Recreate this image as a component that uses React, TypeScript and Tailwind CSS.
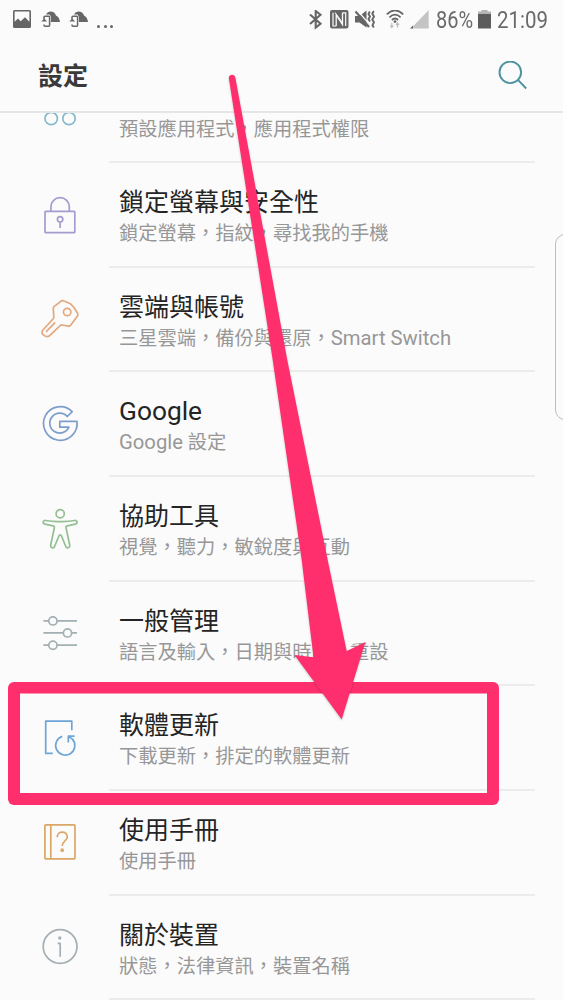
import React from 'react';

interface SettingItem {
  title: React.ReactNode;
  subtitle: React.ReactNode;
  color: string;
  icon: React.ReactNode;
}

// Roboto runs a little small next to the CJK glyphs
const Latin: React.FC<{ children: React.ReactNode }> = ({ children }) => (
  <span className="text-[1.052em] leading-none">{children}</span>
);

const ITEMS: SettingItem[] = [
  {
    title: '應用程式',
    subtitle: '預設應用程式，應用程式權限',
    color: 'text-[#84b9cd]',
    icon: (
      <>
        <circle cx="11.2" cy="9.5" r="6.2" />
        <circle cx="29" cy="9.5" r="6.2" />
        <circle cx="11.2" cy="27.5" r="6.2" />
        <circle cx="29" cy="27.5" r="6.2" />
      </>
    ),
  },
  {
    title: '鎖定螢幕與安全性',
    subtitle: '鎖定螢幕，指紋，尋找我的手機',
    color: 'text-[#a69bcf]',
    icon: (
      <>
        <rect x="5" y="15.3" width="29.8" height="21.4" rx="0.8" />
        <path d="M10.9 15.3v-4.4a9.2 9.2 0 0 1 18.4 0v4.4" />
        <circle cx="20.1" cy="23.3" r="2.7" />
        <path d="M20.1 26v6" />
      </>
    ),
  },
  {
    title: '雲端與帳號',
    subtitle: <>三星雲端，備份與還原，<Latin>Smart Switch</Latin></>,
    color: 'text-[#e3a87e]',
    icon: (
      <>
        <path d="M14.3 6.4 20.8 1.3Q22.3 0.2 24 1L30.5 3.8 34 7.5 37.6 13.3Q38.4 14.8 37.3 16.2L30.8 25Q29.8 26.4 28 26.1L22.3 25Q21 24.8 20.2 25.6L9.6 35.6C6.6 38.3 0 34.2 2.7 30.3L13.2 18.8Q13.9 18 13.8 17L13.3 8.5Q13.3 7.2 14.3 6.4Z" />
        <circle cx="27.2" cy="12" r="3.7" />
        <path d="M6 31.8 15.2 22.4" />
      </>
    ),
  },
  {
    title: <Latin>Google</Latin>,
    subtitle: <><Latin>Google</Latin> 設定</>,
    color: 'text-[#7d9dcb]',
    icon: <path d="M32.2 6.6A16.8 16.8 0 1 0 37 16.4H19.8V22.2H28.9A10 10 0 1 1 27.3 11.5Z" />,
  },
  {
    title: '協助工具',
    subtitle: '視覺，聽力，敏銳度與互動',
    color: 'text-[#93bf93]',
    icon: (
      <>
        <circle cx="20.2" cy="3.7" r="4.1" />
        <path d="M5.5 10.5Q12 11.8 20.2 11.6 28.5 11.8 34.7 10.5C37.6 10.1 38 13.6 35.2 14.2L27.3 15.8Q25.7 16.2 26.1 18L29.7 35C30.2 38 26.6 39 25.7 36.3L21.6 26.2Q20.2 23.4 18.8 26.2L14.7 36.3C13.8 39 10.2 38 10.7 35L14.3 18Q14.7 16.2 13.1 15.8L5 14.2C2.3 13.6 2.7 10.1 5.5 10.5Z" />
      </>
    ),
  },
  {
    title: '一般管理',
    subtitle: '語言及輸入，日期與時間，重設',
    color: 'text-[#a3b0b3]',
    icon: (
      <>
        <path d="M3.4 6.9h5.2M17 6.9h20M3.4 18.9h20M31.7 18.9H37M3.4 31.2h5.2M17 31.2h20" />
        <circle cx="12.9" cy="6.9" r="4.1" />
        <circle cx="27.5" cy="18.9" r="4.1" />
        <circle cx="12.9" cy="31.2" r="4.1" />
      </>
    ),
  },
  {
    title: '軟體更新',
    subtitle: '下載更新，排定的軟體更新',
    color: 'text-[#6ea5d6]',
    icon: (
      <>
        <path d="M12.8 34.3H5.7V2.2H31.8V11.2" />
        <path d="M22.3 17.4A9.6 9.6 0 1 0 32.4 20.1L28.3 17.2" />
        <path d="M34.6 17.2H28.3V23.4" />
      </>
    ),
  },
  {
    title: '使用手冊',
    subtitle: '使用手冊',
    color: 'text-[#dba766]',
    icon: (
      <>
        <rect x="4.9" y="1.9" width="30.1" height="34" rx="0.8" />
        <path d="M10.8 2v34" />
        <path d="M17.2 14.2C17.2 7.5 27.3 7.6 27.3 14 27.3 18 22.2 18 22.2 23" />
        <circle cx="22.2" cy="27.2" r="1" fill="currentColor" />
      </>
    ),
  },
  {
    title: '關於裝置',
    subtitle: '狀態，法律資訊，裝置名稱',
    color: 'text-[#a5aeb3]',
    icon: (
      <>
        <circle cx="20.1" cy="18.5" r="16.9" />
        <circle cx="19.8" cy="10" r="0.8" fill="currentColor" />
        <path d="M17.6 15.4h2.6v13.3" />
      </>
    ),
  },
];

const SyncIcon: React.FC<{ className: string }> = ({ className }) => (
  <svg className={className} width="19" height="20" viewBox="0 0 19 20" fill="currentColor">
    <path d="M5 4.5C7 .2 13.5.2 15 5.500c2.200 1 3.600 3 4 6.500H10V7L8.500 4.500Z" />
    <rect x="3" y="6.2" width="5.6" height="10" rx="1" fill="none" stroke="currentColor" strokeWidth="1.5" />
    <path d="M0 9h4.500v5.500H0Z" fill="#fbfbfb" />
    <path d="M.3 11.5 3.200 8.600l2.900 2.900Z" />
  </svg>
);

const StatusBar: React.FC = () => (
  <div className="flex h-10 items-center text-[#666]">
    <svg className="ml-[13px]" width="18" height="20" viewBox="0 0 18 20">
      <path
        fill="currentColor"
        fillRule="evenodd"
        d="M1.5 0h15Q18 0 18 1.5v15Q18 18 16.5 18h-15Q0 18 0 16.5v-15Q0 0 1.5 0ZM1.6 1.6v10.2L5 8.6l2.700 2.600L12 7.300l4.400 4.500V1.6Z"
      />
    </svg>
    <SyncIcon className="ml-[10px]" />
    <SyncIcon className="ml-[9px]" />
    <div className="ml-[9px] mt-[12px] flex gap-[3.5px]">
      <span className="size-[3px] rounded-full bg-[#666]" />
      <span className="size-[3px] rounded-full bg-[#666]" />
      <span className="size-[3px] rounded-full bg-[#666]" />
    </div>

    <svg className="ml-[196px]" width="14" height="20" viewBox="0 0 14 20" fill="none" stroke="currentColor" strokeWidth="2.1">
      <path d="M1 4.500 11.500 13.800 6.700 17.500V1L11.500 4.800 1 14" />
    </svg>
    <svg className="ml-[7px]" width="19" height="20" viewBox="0 0 19 20">
      <rect width="18.5" height="18.5" rx="2" fill="currentColor" />
      <path d="M6.200 16V5l6.300 9.500V2.800" fill="none" stroke="#fbfbfb" strokeWidth="1.3" />
      <path d="M3 2.800v13.200h3.200M15.700 16V2.800h-3.200" fill="none" stroke="#fbfbfb" strokeWidth="1.2" />
      <path d="M5 2.500 12.800 13" fill="none" stroke="#fbfbfb" strokeWidth="1" />
    </svg>
    <svg className="ml-[6px]" width="21" height="20" viewBox="0 0 21 20">
      <path d="M0 6h4.500l7-5.500v17L4.500 12.500H0Z" fill="currentColor" />
      <path d="M2.500.5 15 15" stroke="#fbfbfb" strokeWidth="1.2" />
      <path d="M.5 1.500 14 17" stroke="currentColor" strokeWidth="2.2" />
      <path d="M14.800 1.500 13.500 4l1.500 2.500-1.500 2.500 1.500 2.500M18.800 1l-1.500 2.800L19 6.600l-1.700 2.800L19 12.200l-1.500 3 1.300 2.300" fill="none" stroke="currentColor" strokeWidth="1.9" />
    </svg>
    <svg className="ml-[10px]" width="18" height="20" viewBox="0 0 18 20" fill="none" stroke="currentColor" strokeWidth="1.8">
      <path d="M.8 4.300Q9-3.500 17.200 4.300M3.400 7.300Q9 2 14.600 7.300M5.900 10Q9 7 12.100 10" />
      <circle cx="9" cy="11.6" r="1.4" fill="currentColor" stroke="none" />
      <path d="M5.800 13v4M4.200 15.500l1.600 2 1.600-2M11.500 17.500v-4M9.900 15l1.600-2 1.600 2" stroke="#bbb" strokeWidth="1.2" />
    </svg>
    <svg className="ml-[6px]" width="20" height="20" viewBox="0 0 20 20">
      <path d="M18.700 0v18.500H1Z" fill="#c4c4c4" />
      <path d="M3 15.500v3H0Z" fill="currentColor" />
    </svg>
    <div className="ml-[6px] w-[38px] whitespace-nowrap text-[23.5px] leading-10 text-[#6a6a6a]">
      <span className="inline-block origin-left scale-x-[0.85]">86%</span>
    </div>
    <svg className="ml-[4px]" width="13" height="20" viewBox="0 0 13 20">
      <path d="M3.500 0h6v1.500H13V5H0V1.500h3.500Z" fill="#b4b4b4" />
      <path d="M0 4h13v14.500H0Z" fill="#5c5c5c" />
    </svg>
    <div className="ml-[6px] w-[52px] whitespace-nowrap text-[23.5px] leading-10 text-[#6a6a6a]">
      <span className="inline-block origin-left scale-x-[0.87]">21:09</span>
    </div>
  </div>
);

const SettingRow: React.FC<{ item: SettingItem }> = ({ item }) => (
  <li className="flex h-[104.65px] shrink-0 pr-7">
    <svg
      className={`ml-[39.5px] mt-[32.5px] shrink-0 overflow-visible ${item.color}`}
      width="40"
      height="40"
      viewBox="0 0 40 40"
      fill="none"
      stroke="currentColor"
      strokeWidth="1.7"
      strokeLinejoin="round"
    >
      {item.icon}
    </svg>
    <div className="ml-[29.5px] flex-1 whitespace-nowrap border-b-2 border-[#ececec] pl-[10px] pt-[23px]">
      <h2 className="h-[34px] text-[25px] leading-[34px] text-[#242424]">{item.title}</h2>
      <p className="h-[28px] text-[19.25px] leading-[28px] text-[#979797]">{item.subtitle}</p>
    </div>
  </li>
);

export default function App() {
  return (
    <div className="relative flex h-[1000px] w-[563px] flex-col overflow-hidden bg-[#fbfbfb] font-[Roboto,'Noto_Sans_CJK_TC',sans-serif]">
      <header className="z-10 h-[112.5px] shrink-0 border-b-2 border-[#e6e6e6] bg-[#fbfbfb]">
        <StatusBar />
        <div className="flex h-[72px] items-center justify-between pl-[38px] pr-[35px]">
          <h1 className="text-[25px] font-bold leading-none text-[#3a3a3a]">設定</h1>
          <svg width="30" height="30" viewBox="0 0 30 30" fill="none" stroke="#4e929f" strokeWidth="1.9">
            <circle cx="12.3" cy="11.3" r="10.8" />
            <path d="m20.2 19.2 8 8.3" />
          </svg>
        </div>
      </header>

      <ul className="-mt-[54px] flex flex-col">
        {ITEMS.map((item, index) => (
          <SettingRow key={index} item={item} />
        ))}
      </ul>

      {/* edge panel handle */}
      <div className="absolute -right-3 top-[234px] h-[186px] w-5 rounded-[10px] border border-[#bdbdbd]" />

      {/* highlight around the software update row */}
      <div className="absolute left-2 top-[682px] h-[122.5px] w-[491px] rounded-md bg-[#ff2f6d] [clip-path:path(evenodd,'M0_0H491V123H0ZM12_11.5V111H479V11.5Z')]" />
      <svg className="absolute left-[220px] top-[65px] z-20 drop-shadow-[0_1px_1px_rgba(0,0,0,0.2)]" width="160" height="665" viewBox="220 65 160 665">
        <path
          fill="#ff2f6d"
          d="M228.9 78.5C228.5 74 234.8 73.5 235.4 77.8L287.3 360 327.7 560 346.7 651 365.3 642.3 341.7 719.5 294.5 655 313.5 657.3 301.7 560 272.7 360Z"
        />
      </svg>
    </div>
  );
}
